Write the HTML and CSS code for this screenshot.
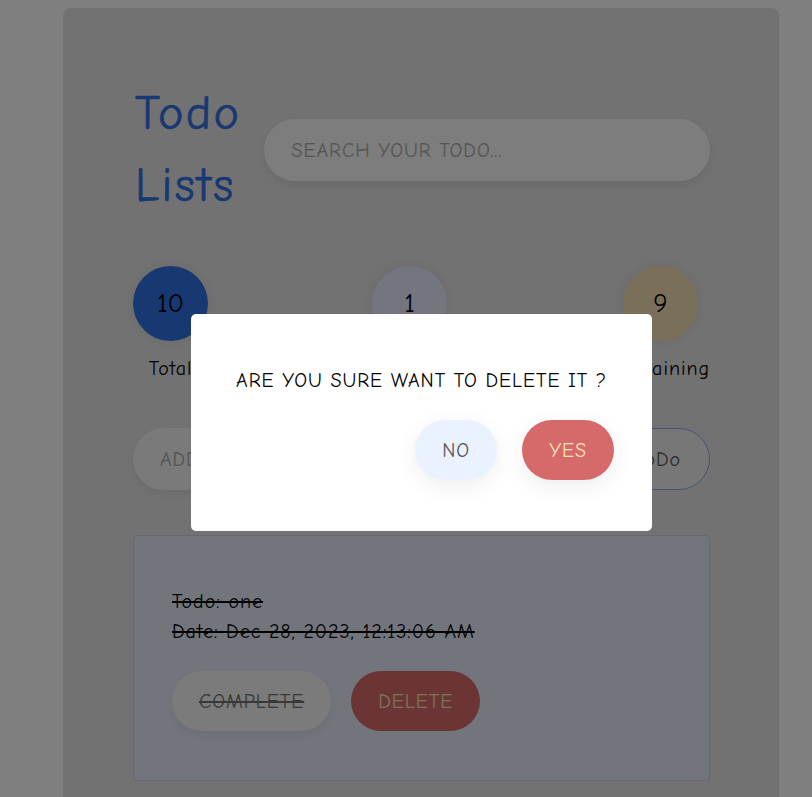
FILE: index.html
```html
<!DOCTYPE html>
<html lang="en">
<head>
<meta charset="utf-8">
<title>Todo Lists</title>
<link rel="stylesheet" href="styles.css">
</head>
<body>
<main class="app">
  <header class="header">
    <h1 class="title">Todo Lists</h1>
    <input class="search" type="text" placeholder="SEARCH YOUR TODO...">
  </header>

  <section class="stats">
    <div class="stat">
      <div class="circle circle-total">10</div>
      <div class="stat-label">Total</div>
    </div>
    <div class="stat">
      <div class="circle circle-done">1</div>
      <div class="stat-label">Completed</div>
    </div>
    <div class="stat">
      <div class="circle circle-left">9</div>
      <div class="stat-label">Remaining</div>
    </div>
  </section>

  <form class="add-row">
    <input class="add-input" type="text" placeholder="ADD YOUR TODO...">
    <button class="add-btn" type="button">Add ToDo</button>
  </form>

  <article class="card">
    <p class="card-line">Todo: one</p>
    <p class="card-line">Date: Dec 28, 2023, 12:13:06 AM</p>
    <div class="card-actions">
      <button class="btn btn-complete" type="button">COMPLETE</button>
      <button class="btn btn-delete" type="button">DELETE</button>
    </div>
  </article>
</main>

<div class="overlay"></div>
<div class="modal">
  <p class="modal-text">ARE YOU SURE WANT TO DELETE IT ?</p>
  <div class="modal-actions">
    <button class="btn btn-no" type="button">NO</button>
    <button class="btn btn-yes" type="button">YES</button>
  </div>
</div>
</body>
</html>
```

FILE: styles.css
```css
* { box-sizing: border-box; }

html, body {
  margin: 0;
  height: 100%;
  overflow: hidden;
}

body {
  background: #ffffff;
  font-family: "Comic Sans MS", "Comic Neue", "Open Sans", sans-serif;
  letter-spacing: 0.06em;
  color: #000;
}

input, button {
  letter-spacing: inherit;
  font-family: inherit;
}

.app {
  margin: 8px 33px 0 63px;
  background: #e5e5e5;
  border-radius: 8px;
  padding: 70px 69px 80px 72px;
}

/* header */
.header {
  display: flex;
  align-items: center;
  gap: 23px;
}

.title {
  margin: 0;
  width: min-content;
  font-size: 48px;
  line-height: 72px;
  font-weight: 400;
  letter-spacing: 0.05em;
  color: #3170e2;
  -webkit-text-stroke: 0.6px #3170e2;
}

.search {
  flex: 1;
  height: 62px;
  border: none;
  border-radius: 31px;
  background: #fafafa;
  padding: 0 27px;
  font-size: 20px;
  box-shadow: 0 4px 10px rgba(0, 0, 0, 0.08);
  outline: none;
}

.search::placeholder,
.add-input::placeholder {
  color: #a9a9a9;
}

/* stats */
.stats {
  display: flex;
  justify-content: space-between;
  margin-top: 44px;
  margin-left: -2px;
}

.stat {
  display: flex;
  flex-direction: column;
  align-items: center;
}

.circle {
  width: 75px;
  height: 75px;
  border-radius: 50%;
  display: flex;
  align-items: center;
  justify-content: center;
  font-size: 27px;
  letter-spacing: 0;
  box-shadow: 0 0 14px rgba(0, 0, 0, 0.08);
}

.circle-total { background: #3170e2; }
.circle-done { background: #e6edfc; }
.circle-left { background: #f5deb3; }

.stat-label {
  margin-top: 13px;
  font-size: 20px;
  line-height: 30px;
  white-space: nowrap;
}

/* add row */
.add-row {
  display: flex;
  gap: 20px;
  margin: 44px 0 0 -2px;
}

.add-input {
  flex: 1;
  height: 62px;
  border: none;
  border-radius: 31px;
  background: #f4f4f4;
  padding: 0 27px;
  font-size: 20px;
  box-shadow: 0 4px 10px rgba(0, 0, 0, 0.06);
  outline: none;
}

.add-btn {
  height: 62px;
  padding: 0 28px;
  border: 1px solid #8aa9ea;
  border-radius: 31px;
  background: #efefef;
  color: #555;
  font-size: 20px;
}

/* card */
.card {
  margin: 45px 0 0 -2px;
  background: #e6ebf9;
  border: 1px solid #cdd0d8;
  border-radius: 4px;
  padding: 51px 38px 49px;
}

.card-line {
  margin: 0;
  font-size: 20px;
  line-height: 30px;
  text-decoration: line-through;
}

.card-actions {
  display: flex;
  gap: 20px;
  margin-top: 24px;
}

.btn {
  height: 60px;
  border: none;
  border-radius: 30px;
  padding: 0 27px;
  font-size: 20px;
  cursor: pointer;
}

.btn-complete {
  background: #f6f6f6;
  color: #707070;
  text-decoration: line-through;
  box-shadow: 0 4px 12px rgba(0, 0, 0, 0.06);
}

.btn-delete {
  background: #d66a6a;
  color: #ffe4b5;
}

/* modal */
.overlay {
  position: fixed;
  inset: 0;
  background: rgba(0, 0, 0, 0.5);
}

.modal {
  position: fixed;
  left: 191px;
  top: 314px;
  width: 461px;
  height: 217px;
  background: #ffffff;
  border-radius: 5px;
  padding: 52px 38px 0;
  text-align: center;
}

.modal-text {
  margin: 0;
  font-size: 20px;
  line-height: 30px;
  white-space: nowrap;
}

.modal-actions {
  display: flex;
  justify-content: flex-end;
  gap: 25px;
  margin-top: 24px;
}

.btn-no {
  background: #ebf2ff;
  color: #555;
  box-shadow: 0 6px 22px rgba(0, 0, 0, 0.07);
}

.btn-yes {
  background: #d66a6a;
  color: #ffe4b5;
  box-shadow: 0 6px 22px rgba(0, 0, 0, 0.07);
}
```
